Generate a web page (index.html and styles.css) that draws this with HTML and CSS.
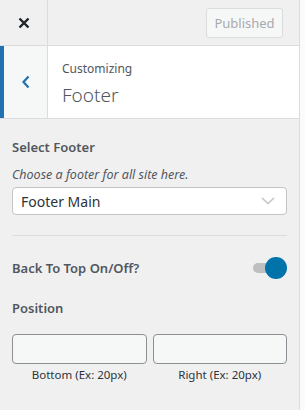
FILE: index.html
```html
<!DOCTYPE html>
<html lang="en">
<head>
    <meta charset="UTF-8">
    <meta name="viewport" content="width=device-width, initial-scale=1.0">
    <title>Customizing Footer</title>
    <link rel="stylesheet" href="styles.css">
</head>
<body>
    <div class="sidebar">
        <div class="topbar">
            <button class="close-btn" aria-label="Close">
                <svg width="12" height="12" viewBox="0 0 12 12">
                    <path d="M1.5 1.5 L10.5 10.5 M10.5 1.5 L1.5 10.5" stroke="#1d2327" stroke-width="2.4" fill="none"/>
                </svg>
            </button>
            <div class="topbar-right">
                <button class="publish-btn" disabled>Published</button>
            </div>
        </div>

        <div class="section-head">
            <button class="back-btn" aria-label="Back">
                <svg width="10" height="14" viewBox="0 0 10 14">
                    <path d="M7.5 1.5 L2.5 7 L7.5 12.5" stroke="#2271b1" stroke-width="2.2" fill="none"/>
                </svg>
            </button>
            <div class="section-title">
                <span class="crumb">Customizing</span>
                <h2>Footer</h2>
            </div>
        </div>

        <div class="controls">
            <div class="control first">
                <div class="control-title">Select Footer</div>
                <div class="control-desc">Choose a footer for all site here.</div>
                <div class="select">
                    <span>Footer Main</span>
                    <svg width="14" height="8" viewBox="0 0 14 8">
                        <path d="M1 1 L7 6.5 L13 1" stroke="#c3c4c7" stroke-width="1.6" fill="none"/>
                    </svg>
                </div>
            </div>

            <hr class="divider">

            <div class="control toggle-row">
                <div class="control-title">Back To Top On/Off?</div>
                <div class="toggle">
                    <span class="track"></span>
                    <span class="knob"></span>
                </div>
            </div>

            <div class="control position">
                <div class="control-title">Position</div>
                <div class="pos-grid">
                    <div class="pos-field">
                        <input type="text">
                        <label>Bottom (Ex: 20px)</label>
                    </div>
                    <div class="pos-field">
                        <input type="text">
                        <label>Right (Ex: 20px)</label>
                    </div>
                </div>
            </div>
        </div>
    </div>
</body>
</html>
```

FILE: styles.css
```css
body {
    margin: 0;
    background: #fdfafa;
    font-family: "Noto Sans", Arial, sans-serif;
    color: #50575e;
}
.sidebar {
    width: 299px;
    height: 410px;
    background: #f0f0f1;
    border-right: 1px solid #dcdcde;
}
.topbar {
    display: flex;
    height: 45px;
    border-bottom: 1px solid #dcdcde;
    background: #f0f0f1;
}
.close-btn {
    width: 48px;
    height: 45px;
    padding: 0;
    border: 0;
    border-right: 1px solid #dcdcde;
    background: transparent;
    display: flex;
    align-items: center;
    justify-content: center;
}
.topbar-right {
    flex: 1;
    display: flex;
    justify-content: flex-end;
    align-items: center;
    padding: 1px 16px 0 0;
}
.publish-btn {
    font-family: inherit;
    font-size: 13px;
    color: #a7aaad;
    background: #f6f7f7;
    border: 1px solid #dcdcde;
    border-radius: 3px;
    height: 30px;
    width: 77px;
    padding: 0;
}
.section-head {
    display: flex;
    height: 72px;
    background: #fff;
    border-bottom: 1px solid #dcdcde;
}
.back-btn {
    width: 48px;
    padding: 0;
    border: 0;
    border-left: 4px solid #2271b1;
    border-right: 1px solid #dcdcde;
    background: #f6f7f7;
    display: flex;
    align-items: center;
    justify-content: center;
}
.section-title {
    padding: 14px 14px 0;
}
.crumb {
    display: block;
    font-size: 12px;
    line-height: 18px;
    color: #50575e;
}
.section-title h2 {
    margin: 4px 0 0;
    font-size: 19px;
    font-weight: 300;
    line-height: 26px;
    color: #50575e;
}
.controls {
    padding: 0 12px;
}
.control-title {
    font-size: 13px;
    font-weight: 600;
    line-height: 20px;
    color: #50575e;
}
.control {
    padding-top: 18px;
}
.control-desc {
    margin-top: 9px;
    font-size: 12.5px;
    font-style: italic;
    line-height: 18px;
}
.select {
    margin-top: 3px;
    height: 28px;
    box-sizing: border-box;
    background: #fff;
    border: 1px solid #c3c4c7;
    border-radius: 4px;
    display: flex;
    align-items: center;
    justify-content: space-between;
    padding: 0 11px 0 8px;
    font-size: 14px;
    color: #2c3338;
}
.divider {
    margin: 20px 0 0;
    border: 0;
    border-top: 1px solid #dcdcde;
}
.toggle-row {
    display: flex;
    justify-content: space-between;
    align-items: center;
    padding-top: 21px;
}
.toggle {
    position: relative;
    width: 42px;
    height: 22px;
}
.track {
    position: absolute;
    left: 8px;
    top: 6px;
    width: 24px;
    height: 10px;
    background: #a7aaad;
    border-radius: 5px;
    opacity: 0.7;
}
.knob {
    position: absolute;
    right: 0;
    top: 0;
    width: 22px;
    height: 22px;
    border-radius: 50%;
    background: #0073aa;
}
.control.position {
    padding-top: 19px;
}
.pos-grid {
    display: grid;
    grid-template-columns: 1fr 1fr;
    gap: 6px;
    margin-top: 16px;
}
.pos-field {
    display: flex;
    flex-direction: column;
}
.pos-field input {
    height: 30px;
    box-sizing: border-box;
    border: 1px solid #8c8f94;
    border-radius: 4px;
    background: #f6f7f7;
    width: 100%;
}
.pos-field label {
    margin-top: 3px;
    text-align: center;
    font-size: 11.5px;
    line-height: 16px;
    color: #2c3338;
}
```
